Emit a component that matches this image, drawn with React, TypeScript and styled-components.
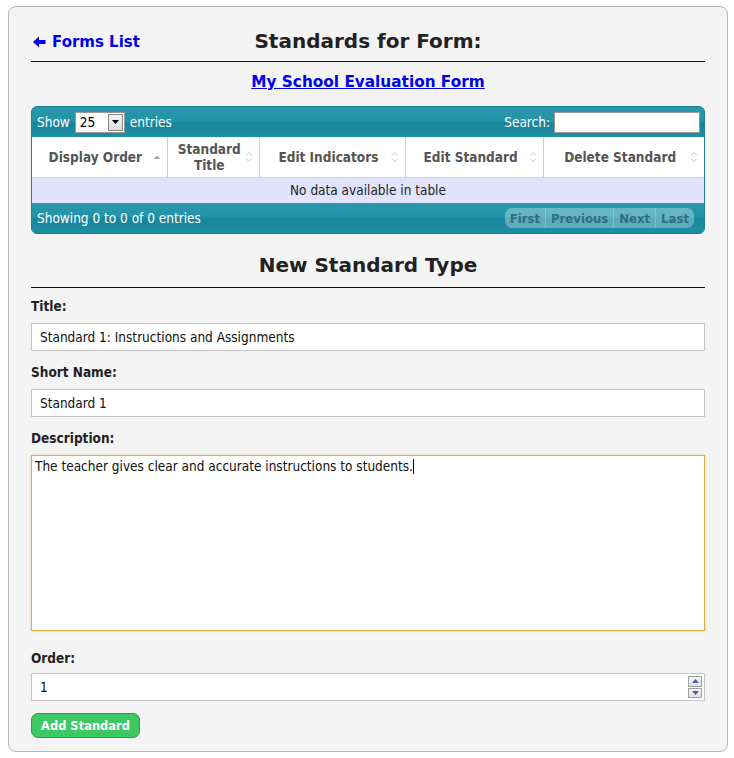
import React from "react";
import styled, { createGlobalStyle } from "styled-components";

const GlobalStyle = createGlobalStyle`
  html, body { margin: 0; padding: 0; background: #fff; }
  body { font-family: "DejaVu Sans Condensed", "DejaVu Sans", sans-serif; font-size: 13.5px; color: #222; }
  * { box-sizing: border-box; }
`;

const Page = styled.div`
  padding: 6px 6px 6px 8px;
`;

const Panel = styled.div`
  border: 1px solid #b4b4b4;
  border-radius: 8px;
  background: #f4f4f4;
  padding: 22px 22px 13px 22px;
  display: flex;
  flex-direction: column;
`;

const HeaderRow = styled.div`
  display: grid;
  grid-template-columns: 1fr auto 1fr;
  align-items: center;
  border-bottom: 1px solid #111;
  padding-bottom: 8px;
`;

const BackLink = styled.a`
  display: flex;
  align-items: center;
  gap: 6px;
  color: #0000ee;
  font-family: "DejaVu Sans", sans-serif;
  font-weight: bold;
  font-size: 15px;
  text-decoration: none;
  padding-top: 1px;
  padding-left: 2px;
`;

const Heading = styled.h1`
  margin: 0;
  font-family: "DejaVu Sans", sans-serif;
  font-weight: bold;
  font-size: 20px;
  color: #222;
  text-align: center;
`;

const SectionHeading = styled(Heading)`
  border-bottom: 1px solid #111;
  padding-bottom: 10px;
`;

const FormLink = styled.a`
  display: block;
  align-self: center;
  margin: 11px 0 15px;
  color: #0000ee;
  font-family: "DejaVu Sans", sans-serif;
  font-weight: bold;
  font-size: 15.3px;
  text-decoration: underline;
`;

const TableWrap = styled.div`
  border-radius: 6px;
  overflow: hidden;
  border: 1px solid #1b8296;
  background: #2190a5;
  margin-bottom: 19px;
`;

const Bar = styled.div`
  height: 30px;
  display: flex;
  align-items: center;
  justify-content: space-between;
  padding: 0 4px 0 5px;
  color: #fff;
  font-size: 13.5px;
  background: linear-gradient(#2a97ab 0%, #2394a8 45%, #17859b 55%, #1f90a4 100%);
`;

const BarGroup = styled.div`
  display: flex;
  align-items: center;
  gap: 4px;
`;

const SelectBox = styled.div`
  display: flex;
  align-items: center;
  width: 50px;
  height: 21px;
  background: #fff;
  border: 1px solid #999;
  color: #000;
  font-size: 13.5px;
  padding-left: 4px;
  justify-content: space-between;
  padding-right: 1px;
  margin: 0 1px;
`;

const SelectArrow = styled.div`
  width: 15px;
  height: 17px;
  border: 1px solid #888;
  background: linear-gradient(#f4f4f4, #dcdcdc);
  display: flex;
  align-items: center;
  justify-content: center;
`;

const SearchInput = styled.div`
  width: 146px;
  height: 21px;
  background: #fff;
  border: 1px solid #999;
`;

const Table = styled.table`
  width: 100%;
  border-collapse: collapse;
  table-layout: fixed;
`;

const Th = styled.th<{ $w: number }>`
  width: ${(p) => p.$w}px;
  height: 40px;
  background: #fff;
  border: 1px solid #d0d0d0;
  border-top: none;
  color: #555;
  font-weight: bold;
  font-size: 13.5px;
  line-height: 16px;
  padding: 0 18px 0 10px;
  text-align: center;
  position: relative;
  &:first-child { border-left: none; }
  &:last-child { border-right: none; }
`;

const SortIcon = styled.span`
  position: absolute;
  right: 6px;
  top: 50%;
  transform: translateY(-50%);
  display: flex;
`;

const EmptyCell = styled.td`
  height: 26px;
  background: #e2e4ff;
  text-align: center;
  color: #222;
  font-size: 13.5px;
`;

const Pager = styled.div`
  display: flex;
  height: 20px;
  border-radius: 7px;
  overflow: hidden;
  background: rgba(255, 255, 255, 0.3);
  margin-right: 6px;
`;

const PageBtn = styled.span`
  display: flex;
  align-items: center;
  padding: 0 5px;
  color: #2d6f80;
  font-weight: bold;
  font-size: 13px;
  & + & { border-left: 1px solid rgba(255, 255, 255, 0.2); }
`;

const Field = styled.div<{ $top: number }>`
  display: flex;
  flex-direction: column;
  margin-top: ${(p) => p.$top}px;
`;

const Label = styled.label<{ $gap?: number }>`
  font-weight: bold;
  color: #222;
  font-size: 13.5px;
  margin-bottom: ${(p) => p.$gap ?? 9}px;
`;

const TextInput = styled.div`
  height: 28px;
  background: #fff;
  border: 1px solid #c4c4c4;
  display: flex;
  align-items: center;
  padding-left: 8px;
  color: #111;
  font-size: 13.5px;
  position: relative;
`;

const TextArea = styled.div`
  height: 176px;
  background: #fff;
  border: 1px solid #e3a84a;
  box-shadow: 0 0 2px rgba(230, 170, 70, 0.6);
  padding: 2px 3px;
  color: #111;
  font-size: 13.5px;
`;

const Caret = styled.span`
  display: inline-block;
  width: 1px;
  height: 15px;
  background: #000;
  vertical-align: -3px;
`;

const Spinner = styled.div`
  position: absolute;
  right: 2px;
  top: 2px;
  bottom: 2px;
  display: flex;
  flex-direction: column;
  gap: 1px;
`;

const SpinBtn = styled.div`
  width: 14px;
  flex: 1;
  border: 1px solid #a0a0a0;
  background: linear-gradient(#f6f6f6, #e0e0e0);
  display: flex;
  align-items: center;
  justify-content: center;
`;

const SubmitButton = styled.button`
  align-self: flex-start;
  margin-top: 12px;
  height: 25px;
  padding: 0 9px;
  background: #3ec863;
  border: 1px solid #2a9a4a;
  border-radius: 7px;
  color: #fff;
  font-family: "DejaVu Sans", sans-serif;
  font-weight: bold;
  font-size: 11.5px;
`;

const SortBoth = () => (
  <svg width="8" height="11" viewBox="0 0 8 11">
    <path d="M1 4 L4 1 L7 4" fill="none" stroke="#c4c4c4" strokeWidth="1" />
    <path d="M1 7 L4 10 L7 7" fill="none" stroke="#c4c4c4" strokeWidth="1" />
  </svg>
);

const SortAsc = () => (
  <svg width="8" height="5" viewBox="0 0 8 5">
    <path d="M0.5 4.5 L4 1 L7.5 4.5 Z" fill="#a8a8a8" />
  </svg>
);

const Tri = ({ up }: { up?: boolean }) => (
  <svg width="7" height="4" viewBox="0 0 7 4">
    <path d={up ? "M0 4 L3.5 0 L7 4 Z" : "M0 0 L7 0 L3.5 4 Z"} fill="#4a5fa8" />
  </svg>
);

const columns = [
  { title: "Display Order", w: 135, asc: true },
  { title: "Standard Title", w: 92 },
  { title: "Edit Indicators", w: 146 },
  { title: "Edit Standard", w: 138 },
  { title: "Delete Standard", w: 160 },
];

export default function App() {
  return (
    <>
      <GlobalStyle />
      <Page>
        <Panel>
          <HeaderRow>
            <BackLink href="#">
              <svg width="13" height="12" viewBox="0 0 13 12">
                <path d="M0 6 L6 0.5 L6 4 L12.5 4 L12.5 8 L6 8 L6 11.5 Z" fill="#0000ee" />
              </svg>
              Forms List
            </BackLink>
            <Heading>Standards for Form:</Heading>
            <span />
          </HeaderRow>
          <FormLink href="#">My School Evaluation Form</FormLink>
          <TableWrap>
            <Bar>
              <BarGroup>
                Show
                <SelectBox>
                  25
                  <SelectArrow>
                    <svg width="7" height="4" viewBox="0 0 7 4">
                      <path d="M0 0 L7 0 L3.5 4 Z" fill="#000" />
                    </svg>
                  </SelectArrow>
                </SelectBox>
                entries
              </BarGroup>
              <BarGroup>
                Search:
                <SearchInput />
              </BarGroup>
            </Bar>
            <Table>
              <thead>
                <tr>
                  {columns.map((c) => (
                    <Th key={c.title} $w={c.w}>
                      {c.title}
                      <SortIcon>{c.asc ? <SortAsc /> : <SortBoth />}</SortIcon>
                    </Th>
                  ))}
                </tr>
              </thead>
              <tbody>
                <tr>
                  <EmptyCell colSpan={5}>No data available in table</EmptyCell>
                </tr>
              </tbody>
            </Table>
            <Bar>
              <span>Showing 0 to 0 of 0 entries</span>
              <Pager>
                <PageBtn>First</PageBtn>
                <PageBtn>Previous</PageBtn>
                <PageBtn>Next</PageBtn>
                <PageBtn>Last</PageBtn>
              </Pager>
            </Bar>
          </TableWrap>
          <SectionHeading>New Standard Type</SectionHeading>
          <Field $top={10}>
            <Label>Title:</Label>
            <TextInput>Standard 1: Instructions and Assignments</TextInput>
          </Field>
          <Field $top={13}>
            <Label>Short Name:</Label>
            <TextInput>Standard 1</TextInput>
          </Field>
          <Field $top={13}>
            <Label>Description:</Label>
            <TextArea>
              The teacher gives clear and accurate instructions to students.
              <Caret />
            </TextArea>
          </Field>
          <Field $top={19}>
            <Label $gap={7}>Order:</Label>
            <TextInput>
              1
              <Spinner>
                <SpinBtn><Tri up /></SpinBtn>
                <SpinBtn><Tri /></SpinBtn>
              </Spinner>
            </TextInput>
          </Field>
          <SubmitButton>Add Standard</SubmitButton>
        </Panel>
      </Page>
    </>
  );
}
